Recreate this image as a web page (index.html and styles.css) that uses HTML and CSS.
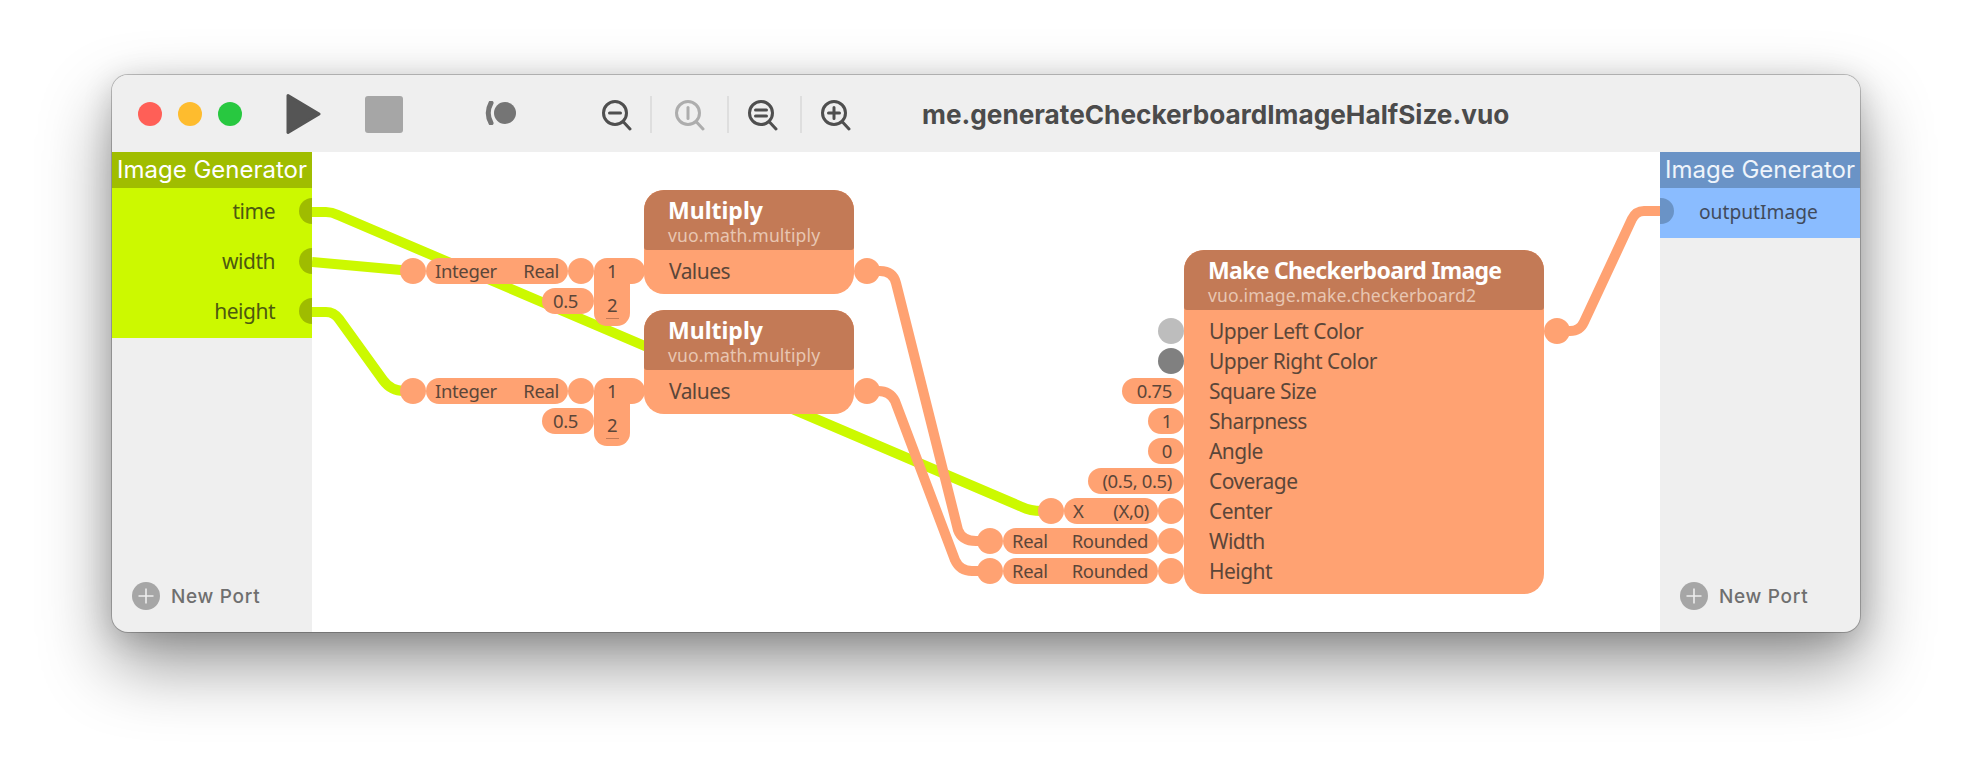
FILE: index.html
```html
<!DOCTYPE html>
<html lang="en">
<head>
    <meta charset="UTF-8">
    <meta name="viewport" content="width=device-width, initial-scale=1.0">
    <title>me.generateCheckerboardImageHalfSize.vuo</title>
    <link rel="stylesheet" href="styles.css">
</head>
<body>
  <div class="window">
    <div class="titlebar">
      <div class="lights">
        <span class="light light-red"></span>
        <span class="light light-yellow"></span>
        <span class="light light-green"></span>
      </div>
      <svg class="icon-play" viewBox="0 0 35 42"><path d="M2 2.5 L33 21 L2 39.5 Z" fill="#555" stroke="#555" stroke-width="3" stroke-linejoin="round"/></svg>
      <span class="icon-stop"></span>
      <svg class="icon-record" viewBox="0 0 31 24"><circle cx="20" cy="12" r="11" fill="#757575"/><path d="M6 2 Q0.5 12 6 22" fill="none" stroke="#757575" stroke-width="5" stroke-linecap="round"/></svg>
      <svg class="icon-zoom first" viewBox="0 0 32 36"><circle cx="15" cy="15" r="11.5"/><path d="M23.5 24 L30 31"/><path d="M9.5 15 H20.5"/></svg>
      <span class="tool-sep first"></span>
      <svg class="icon-zoom muted" viewBox="0 0 32 36"><circle cx="15" cy="15" r="11.5"/><path d="M23.5 24 L30 31"/><path d="M15 9.5 V20.5"/></svg>
      <span class="tool-sep"></span>
      <svg class="icon-zoom" viewBox="0 0 32 36"><circle cx="15" cy="15" r="11.5"/><path d="M23.5 24 L30 31"/><path d="M9.5 12 H20.5 M9.5 18 H20.5"/></svg>
      <span class="tool-sep"></span>
      <svg class="icon-zoom" viewBox="0 0 32 36"><circle cx="15" cy="15" r="11.5"/><path d="M23.5 24 L30 31"/><path d="M9.5 15 H20.5 M15 9.5 V20.5"/></svg>
      <div class="doc-title">me.generateCheckerboardImageHalfSize.vuo</div>
    </div>

    <div class="main">
      <div class="panel panel-in">
        <div class="panel-head">Image Generator</div>
        <div class="panel-ports">
          <div class="panel-port">time</div>
          <div class="panel-port">width</div>
          <div class="panel-port">height</div>
        </div>
        <div class="new-port">
          <svg viewBox="0 0 28 28"><circle cx="14" cy="14" r="14" fill="#a6a6a6"/><path d="M14 6.5 V21.5 M6.5 14 H21.5" stroke="#eee" stroke-width="1.6"/></svg>
          <span>New Port</span>
        </div>
      </div>

      <div class="canvas">
        <svg class="cables" viewBox="0 0 1348 480">
          <g class="cable-green">
            <path d="M0 60 H14 Q20 60 26 63 L710 355 Q718 359 730 359"/>
            <path d="M0 110 L100 119"/>
            <path d="M0 160 H14 Q22 160 27 167 L71 228 Q79 239 92 239 H100"/>
          </g>
          <g class="cable-orange">
            <path d="M556 119 H568 Q581 119 584 131 L646 378 Q650 389 664 389 H680"/>
            <path d="M556 239 H566 Q578 239 583 249 L643 408 Q648 419 660 419 H680"/>
            <path d="M1245 179 H1258 Q1268 179 1272 170 L1320 67 Q1324 59 1332 59 H1348"/>
          </g>
        </svg>

        <div class="node node-mul-a">
          <div class="chain">
            <div class="chain-row"><span class="port"></span><span class="pill pill-wide"><span>Integer</span><span>Real</span></span><span class="port"></span></div>
            <div class="chain-row"><span class="pill pill-val">0.5</span></div>
          </div>
          <div class="list"><span>1</span><span>2</span></div>
          <div class="node-head">
            <div class="node-title">Multiply</div>
            <div class="node-class">vuo.math.multiply</div>
          </div>
          <div class="node-body"><div class="node-row">Values</div></div>
          <span class="port port-out"></span>
        </div>

        <div class="node node-mul-b">
          <div class="chain">
            <div class="chain-row"><span class="port"></span><span class="pill pill-wide"><span>Integer</span><span>Real</span></span><span class="port"></span></div>
            <div class="chain-row"><span class="pill pill-val">0.5</span></div>
          </div>
          <div class="list"><span>1</span><span>2</span></div>
          <div class="node-head">
            <div class="node-title">Multiply</div>
            <div class="node-class">vuo.math.multiply</div>
          </div>
          <div class="node-body"><div class="node-row">Values</div></div>
          <span class="port port-out"></span>
        </div>

        <div class="node node-checker">
          <div class="inputs">
            <div class="chain-row"><span class="port port-light"></span></div>
            <div class="chain-row"><span class="port port-dark"></span></div>
            <div class="chain-row"><span class="pill pill-const w-62">0.75</span></div>
            <div class="chain-row"><span class="pill pill-const w-36">1</span></div>
            <div class="chain-row"><span class="pill pill-const w-36">0</span></div>
            <div class="chain-row"><span class="pill pill-const w-96">(0.5, 0.5)</span></div>
            <div class="chain-row"><span class="port"></span><span class="pill pill-x"><span>X</span><span>(X,0)</span></span><span class="port"></span></div>
            <div class="chain-row"><span class="port"></span><span class="pill pill-round"><span>Real</span><span>Rounded</span></span><span class="port"></span></div>
            <div class="chain-row"><span class="port"></span><span class="pill pill-round"><span>Real</span><span>Rounded</span></span><span class="port"></span></div>
          </div>
          <div class="node-head">
            <div class="node-title">Make Checkerboard Image</div>
            <div class="node-class">vuo.image.make.checkerboard2</div>
          </div>
          <div class="node-body">
            <div class="node-row">Upper Left Color</div>
            <div class="node-row">Upper Right Color</div>
            <div class="node-row">Square Size</div>
            <div class="node-row">Sharpness</div>
            <div class="node-row">Angle</div>
            <div class="node-row">Coverage</div>
            <div class="node-row">Center</div>
            <div class="node-row">Width</div>
            <div class="node-row">Height</div>
          </div>
          <span class="port port-out"></span>
        </div>
      </div>

      <div class="panel panel-out">
        <div class="panel-head">Image Generator</div>
        <div class="panel-ports">
          <div class="panel-port">outputImage</div>
        </div>
        <div class="new-port">
          <svg viewBox="0 0 28 28"><circle cx="14" cy="14" r="14" fill="#a6a6a6"/><path d="M14 6.5 V21.5 M6.5 14 H21.5" stroke="#eee" stroke-width="1.6"/></svg>
          <span>New Port</span>
        </div>
      </div>
    </div>
  </div>
</body>
</html>
```

FILE: styles.css
```css
body {
  margin: 0;
  height: 780px;
  box-sizing: border-box;
  padding: 75px 0 0 112px;
  background-color: #fff;
  font-family: "Noto Sans", sans-serif;
}

.window {
  width: 1748px;
  height: 557px;
  display: flex;
  flex-direction: column;
  border-radius: 16px;
  overflow: hidden;
  background-color: #efefef;
  box-shadow: 0 0 0 1px rgba(0, 0, 0, 0.22), 0 32px 70px rgba(0, 0, 0, 0.42), 0 6px 30px rgba(0, 0, 0, 0.16);
}

/* title bar */
.titlebar {
  height: 77px;
  box-sizing: border-box;
  flex: none;
  display: flex;
  align-items: center;
  padding: 1px 0 0 26px;
  background-color: #efefef;
}

.lights {
  display: flex;
  gap: 16px;
}

.light {
  width: 24px;
  height: 24px;
  border-radius: 50%;
}

.light-red { background-color: #ff5f57; }
.light-yellow { background-color: #febc2e; }
.light-green { background-color: #28c840; }

.icon-play {
  width: 35px;
  height: 42px;
  margin-left: 44px;
}

.icon-stop {
  width: 38px;
  height: 37px;
  margin-left: 44px;
  border-radius: 3px;
  background-color: #a6a6a6;
}

.icon-record {
  width: 31px;
  height: 24px;
  margin-left: 82px;
  margin-bottom: 3px;
}

.icon-zoom {
  width: 32px;
  height: 36px;
  margin-top: 4px;
  fill: none;
  stroke: #4f4f4f;
  stroke-width: 3;
  stroke-linecap: round;
}

.icon-zoom.first { margin-left: 84px; }
.icon-zoom.muted { stroke: #adadad; }

.tool-sep {
  width: 2px;
  height: 37px;
  margin: 0 17px 0 22px;
  background-color: #dedede;
}

.tool-sep.first { margin: 0 21px 0 18px; }

.doc-title {
  margin-left: 71px;
  font-family: Inter, sans-serif;
  font-size: 26.2px;
  font-weight: 700;
  color: #4b4b4b;
  white-space: nowrap;
}

/* side panels */
.main {
  flex: 1;
  display: flex;
  min-height: 0;
}

.panel {
  flex: none;
  width: 200px;
  display: flex;
  flex-direction: column;
  position: relative;
  overflow: hidden;
}

.panel-head {
  height: 36px;
  line-height: 36px;
  text-align: center;
  font-family: Inter, sans-serif;
  font-size: 24px;
  color: #fff;
  white-space: nowrap;
}

.panel-port {
  height: 50px;
  line-height: 46px;
  position: relative;
  font-size: 21px;
  letter-spacing: -0.5px;
}

.panel-port::before {
  content: "";
  position: absolute;
  top: 10px;
  width: 26px;
  height: 26px;
  border-radius: 50%;
}

.panel-in .panel-head { background-color: #a0bd00; }
.panel-in .panel-ports { background-color: #ccf900; color: #4d5a10; }
.panel-in .panel-port { text-align: right; padding-right: 37px; }
.panel-in .panel-port::before { right: -13px; background-color: #9fbc00; }

.panel-out .panel-head { background-color: #6a93c6; color: #eef4fb; }
.panel-out .panel-ports { background-color: #8abcff; color: #414b5c; }
.panel-out .panel-port { padding-left: 39px; font-size: 19.2px; line-height: 48px; letter-spacing: 0; }
.panel-out .panel-port::before { left: -12px; background-color: #6a93c6; }

.new-port {
  margin-top: auto;
  padding: 0 0 22px 20px;
  display: flex;
  align-items: center;
  gap: 11px;
  font-family: Inter, sans-serif;
  font-size: 19px;
  font-weight: 500;
  letter-spacing: 0.7px;
  color: #6f6f6f;
}

.new-port svg {
  width: 28px;
  height: 28px;
}

/* graph canvas */
.canvas {
  flex: 1;
  position: relative;
  background-color: #fff;
}

.cables {
  position: absolute;
  top: 0;
  left: 0;
  width: 1348px;
  height: 480px;
}

.cables path {
  fill: none;
  stroke-width: 10;
}

.cable-green { stroke: #ccf900; }
.cable-orange { stroke: #ffa272; }

.node {
  position: absolute;
  display: flex;
  flex-direction: column;
  border-radius: 20px;
  background-color: #ffa272;
  color: #5b4639;
  font-size: 21px;
  letter-spacing: -0.55px;
}

.node-mul-a { left: 332px; top: 38px; width: 210px; }
.node-mul-b { left: 332px; top: 158px; width: 210px; }
.node-checker { left: 872px; top: 98px; width: 360px; }

.node-head {
  height: 60px;
  box-sizing: border-box;
  padding: 5px 0 0 24px;
  border-radius: 20px 20px 3px 3px;
  background-color: #c37a56;
}

.node-title {
  height: 30px;
  line-height: 30px;
  font-size: 23px;
  font-weight: 700;
  letter-spacing: 0;
  color: #fff;
  white-space: nowrap;
}

.node-checker .node-title { letter-spacing: -0.7px; }

.node-class {
  line-height: 20px;
  font-size: 17.6px;
  letter-spacing: 0.1px;
  color: #e8c6b2;
  white-space: nowrap;
}

.node-body {
  padding: 6px 0 8px 25px;
}

.node-row {
  height: 30px;
  line-height: 30px;
  white-space: nowrap;
}

/* ports and pills around a node */
.port {
  flex: none;
  width: 26px;
  height: 26px;
  border-radius: 50%;
  background-color: #ffa272;
}

.port-light { background-color: #bdbdbd; }
.port-dark { background-color: #808080; }

.port-out {
  position: absolute;
  left: 100%;
  top: 68px;
}

.chain {
  position: absolute;
  right: calc(100% + 50px);
  top: 66px;
}

.inputs {
  position: absolute;
  right: 100%;
  top: 66px;
}

.chain-row {
  height: 30px;
  display: flex;
  justify-content: flex-end;
  align-items: center;
}

.pill {
  flex: none;
  height: 26px;
  line-height: 26px;
  box-sizing: border-box;
  border-radius: 13px;
  background-color: #ffa272;
  font-size: 18.5px;
  letter-spacing: -0.35px;
  white-space: nowrap;
}

.pill-wide,
.pill-x,
.pill-round {
  display: flex;
  justify-content: space-between;
}

.pill-wide { width: 142px; padding: 0 9px 0 9px; }
.pill-x { width: 94px; padding: 0 9px; }
.pill-round { width: 155px; padding: 0 10px 0 9px; }

.pill-val { width: 52px; padding-left: 11px; }

.pill-const {
  padding-right: 12px;
  text-align: right;
}

.w-36 { width: 36px; }
.w-62 { width: 62px; }
.w-96 { width: 96px; }

.list {
  position: absolute;
  left: -50px;
  top: 68px;
  width: 36px;
  height: 68px;
  border-radius: 13px 0 13px 13px;
  background-color: #ffa272;
  font-size: 18.5px;
  text-align: center;
}

.list span {
  display: block;
  height: 30px;
  line-height: 26px;
}

.list span + span {
  line-height: 34px;
}

/* tab that ties the list to the first input */
.list::before {
  content: "";
  position: absolute;
  left: 100%;
  top: 0;
  width: 15px;
  height: 26px;
  border-radius: 0 13px 13px 0;
  background-color: #ffa272;
}

.list::after {
  content: "";
  position: absolute;
  left: 12px;
  bottom: 7px;
  width: 13px;
  height: 1px;
  background-color: #c37a56;
}
```
